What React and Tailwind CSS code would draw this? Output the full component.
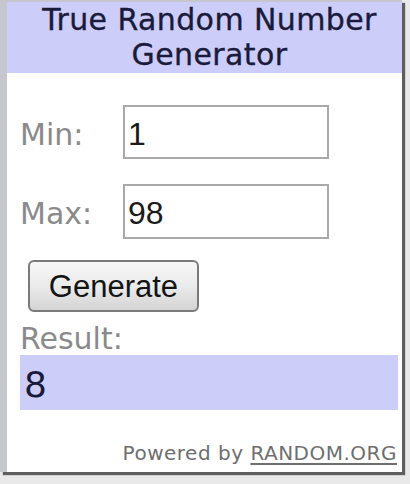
import React from 'react';

export default function App() {
    return (
        <div className="w-[410px] h-[484px] bg-[#e9e9ea] overflow-hidden">
            {/* Widget card */}
            <div className="w-[402px] h-[472px] bg-white border-l-[7px] border-t-2 border-[#c6c6ce] shadow-[3px_3px_1px_#5e5e5e] flex flex-col">
                {/* Header */}
                <div className="bg-[#cdcdfa] pl-[10px] pb-[1px] text-center text-[30px] leading-[35px] tracking-[0.4px] text-[#1a1a3a] [-webkit-text-stroke:0.35px_#1a1a3a] font-['DejaVu_Sans',sans-serif]">
                    True Random Number
                    <br />
                    Generator
                </div>

                {/* Body */}
                <div className="flex flex-col pl-[13px] pr-[4px] pt-[32px] font-['DejaVu_Sans',sans-serif]">
                    <div className="flex items-start h-[54px]">
                        <span className="w-[103px] mt-[12px] text-[30px] leading-[36px] text-[#8a8a8a]">Min:</span>
                        <input
                            readOnly
                            value="1"
                            className="w-[206px] h-[54px] box-border border-2 border-[#a9a9a9] pl-[3px] pt-[4px] text-[32px] text-[#1a1a1a] font-['Liberation_Sans',Arial,sans-serif] outline-none"
                        />
                    </div>
                    <div className="flex items-start h-[55px] mt-[25px]">
                        <span className="w-[103px] mt-[12px] text-[30px] leading-[36px] text-[#8a8a8a]">Max:</span>
                        <input
                            readOnly
                            value="98"
                            className="w-[206px] h-[55px] box-border border-2 border-[#a9a9a9] pl-[3px] pt-[4px] text-[32px] text-[#1a1a1a] font-['Liberation_Sans',Arial,sans-serif] outline-none"
                        />
                    </div>

                    <button className="self-start ml-[8px] mt-[21px] w-[171px] h-[52px] rounded-[6px] border-2 border-[#7a7a7a] bg-gradient-to-b from-[#f7f7f7] via-[#ebebeb] to-[#d4d4d4] text-[31px] leading-none text-[#141414] font-['Liberation_Sans',Arial,sans-serif]">
                        Generate
                    </button>

                    <div className="mt-[12px] text-[30px] leading-[30px] text-[#8a8a8a]">Result:</div>
                    <div className="mt-[1px] h-[55px] bg-[#cdcdfa] pl-[4px] pt-[12px] text-[36px] leading-[36px] text-[#1a1a3a]">
                        8
                    </div>

                    <div className="mt-[31px] mr-[1px] text-right text-[20px] leading-[24px] tracking-[0.5px] text-[#6e6e6e]">
                        Powered by <span className="underline underline-offset-[3px]">RANDOM.ORG</span>
                    </div>
                </div>
            </div>
        </div>
    );
}
